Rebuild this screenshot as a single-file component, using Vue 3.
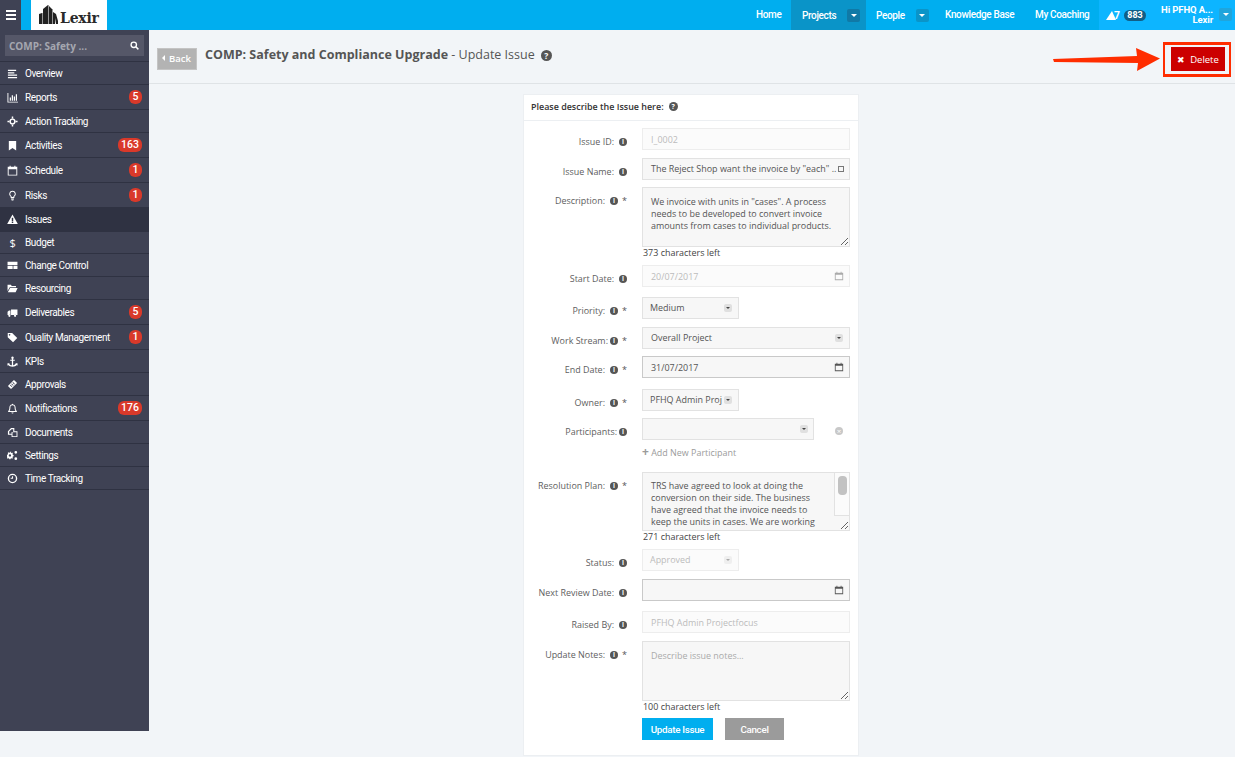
<script setup>
const navIcons = {
  overview: 'M1 2h9v1.3H1zM1 4.6h7v1.3H1zM1 7.2h10v1.3H1zM1 9.8h10v1.3H1z',
  reports: 'M0.5 1h1v9.5H12v1H0.5zM3 6h1.3v3.5H3zM5.2 3.5h1.3v6H5.2zM7.4 5h1.3v4.5H7.4zM9.6 2.5h1.3v7H9.6z',
  action: 'M6 2.6a3.4 3.4 0 1 1 0 6.8a3.4 3.4 0 0 1 0-6.8zm0 1.6a1.8 1.8 0 1 0 0 3.6a1.8 1.8 0 0 0 0-3.6zM5.2 0.5h1.6v2.4H5.2zM5.2 9.1h1.6v2.4H5.2zM0.5 5.2h2.4v1.6H0.5zM9.1 5.2h2.4v1.6H9.1z',
  activities: 'M2 1h8v10.5L6 8.6L2 11.5z',
  schedule: 'M0.8 2h2V0.8h1.2V2h4V0.8h1.2V2h2v9.5H0.8zM1.8 4.6v5.9h8.4V4.6z',
  risks: 'M6 0.8a3.6 3.6 0 0 1 2 6.6V8.6H4V7.4A3.6 3.6 0 0 1 6 0.8zm0 1.1a2.5 2.5 0 0 0-1 4.8v0.9h2v-0.9a2.5 2.5 0 0 0-1-4.8zM4.4 9.3h3.2v1H4.4zM5 10.7h2v0.8H5z',
  issues: 'M6 0.6L11.8 11H0.2zM5.2 4v3.8h1.6V4zM5.2 8.4v1.4h1.6V8.4z',
  changeControl: 'M0.6 2h10.8v3.4H0.6zM0.6 6.4h5.6v3.4H0.6zM7 6.4h4.4v3.4H7z',
  resourcing: 'M0.6 2h3.6l1 1.2h4.6v1.4H3L0.6 8.6zM3.4 5.4h8.2L9.4 10H0.9z',
  deliverables: 'M4.4 2.6h7v6.2h-7zM0.6 5.2L2.2 3.8h1.6v5H0.6zM2.6 8.4a1.2 1.2 0 1 1 0 2.4a1.2 1.2 0 0 1 0-2.4zM8.8 8.4a1.2 1.2 0 1 1 0 2.4a1.2 1.2 0 0 1 0-2.4z',
  quality: 'M0.8 1h4.8l5.6 5.6l-4.6 4.6L0.8 5.6zM2.8 2.2a.9.9 0 1 0 0 1.8a.9.9 0 0 0 0-1.8z',
  kpis: 'M6 0.5a1.4 1.4 0 0 1 .7 2.6v.9h1.8v1.2H6.7v4.9c1.4-.2 2.5-.9 3-1.8L8.7 8h2.8v2.6l-.8-.8C9.8 10.9 8 11.7 6 11.7s-3.8-.8-4.7-1.9l-.8.8V8h2.8l-1 .4c.5.9 1.6 1.6 3 1.8V5.2H3.5V4h1.8v-.9A1.4 1.4 0 0 1 6 .5z',
  approvals: 'M7.6 1L11 4.4L4.4 11L1 7.6zM6.6 3.4l-.6.6l2 2l.6-.6zM5.2 4.8l-.6.6l2 2l.6-.6zM3.8 6.2l-.6.6l2 2l.6-.6z',
  notifications: 'M6 0.8c.4 0 .7.3.7.7c1.7.3 2.7 1.6 2.7 3.4c0 2.3.5 3.2 1.4 4.1v.8H1.2V9c.9-.9 1.4-1.8 1.4-4.1c0-1.8 1-3.1 2.7-3.4c0-.4.3-.7.7-.7zm0 1.7C4.6 2.5 3.7 3.4 3.7 5c0 1.8-.3 2.9-.9 3.7h6.4c-.6-.8-.9-1.9-.9-3.7c0-1.6-.9-2.5-2.3-2.5zM4.8 10.3h2.4a1.2 1.2 0 0 1-2.4 0z',
  documents: 'M4.4 1H8v3.6h3.4V11H5V8.4H1V4.6zm.6 1.4L2.4 5v2.4H5V5.5h1.8V2.4zM6 5.6V10h4.400V5.600z',
  settings: 'M4 3l.9.3.7-.5.9.9-.5.7.3.9.9.2v1.3l-.9.2-.3.9.5.7-.9.9-.7-.5-.9.3-.2.9H2.500l-.2-.9-.9-.3-.7.5-.9-.9.5-.7-.3-.9L0 6.500V5.200l.9-.2.3-.9-.5-.7.9-.9.7.5.9-.3.2-.9h1.300zM3.200 4.600a1.300 1.300 0 1 0 0 2.600a1.300 1.300 0 0 0 0-2.600zM9.600 1a1.500 1.500 0 1 1 0 3a1.500 1.500 0 0 1 0-3zm0 7a1.500 1.500 0 1 1 0 3a1.500 1.500 0 0 1 0-3z',
  time: 'M6 .8a5.200 5.200 0 1 1 0 10.400A5.200 5.200 0 0 1 6 .8zm0 1.500a3.700 3.700 0 1 0 0 7.400a3.700 3.700 0 0 0 0-7.400zM5.500 3.500h1.100v2.800H4V5.300h1.500z'
}
const sidebar = [
  { name: 'Overview', icon: 'overview' },
  { name: 'Reports', icon: 'reports', badge: '5' },
  { name: 'Action Tracking', icon: 'action' },
  { name: 'Activities', icon: 'activities', badge: '163' },
  { name: 'Schedule', icon: 'schedule', badge: '1' },
  { name: 'Risks', icon: 'risks', badge: '1' },
  { name: 'Issues', icon: 'issues', active: true },
  { name: 'Budget', glyph: '$', compact: true },
  { name: 'Change Control', icon: 'changeControl' },
  { name: 'Resourcing', icon: 'resourcing' },
  { name: 'Deliverables', icon: 'deliverables', badge: '5' },
  { name: 'Quality Management', icon: 'quality', badge: '1' },
  { name: 'KPIs', icon: 'kpis' },
  { name: 'Approvals', icon: 'approvals' },
  { name: 'Notifications', icon: 'notifications', badge: '176' },
  { name: 'Documents', icon: 'documents' },
  { name: 'Settings', icon: 'settings' },
  { name: 'Time Tracking', icon: 'time' }
]
const calendar = 'M1 2h2V1h1v1h4V1h1v1h2v9H1zM2 4.500V10h8V4.500z'
</script>

<template>
  <div class="page">
    <header class="topbar">
      <button class="burger" aria-label="Menu"><span></span><span></span><span></span></button>
      <div class="logo">
        <svg width="21" height="21" viewBox="0 0 21 21" aria-hidden="true">
          <path fill="#222" d="M0 20V10l3-1v11zM4 20V5l5-4v19zM10 20V2l3 3v15zM14 20V8l3 2l2 7v3h-2v-6l-1 6z" />
          <path fill="#999" d="M3 20V9h1v11zM9 20V1h1v19zM13 20V5h1v15z" />
        </svg>
        <span class="logo-text">Lexir</span>
      </div>
      <nav class="mainnav">
        <a class="navitem home">Home</a>
        <a class="navitem active projects">Projects<i class="caret-box"><b></b></i></a>
        <a class="navitem people">People<i class="caret-box"><b></b></i></a>
        <a class="navitem kb">Knowledge Base</a>
        <a class="navitem coaching">My Coaching</a>
      </nav>
      <div class="userarea">
        <svg class="bell" width="11" height="11" viewBox="0 0 11 11" aria-hidden="true"><path fill="#fff" d="M6 1L10 10H0z" /></svg>
        <span class="count">7</span>
        <span class="pill">883</span>
        <span class="hello"><span>Hi PFHQ A...</span><span>Lexir</span></span>
        <i class="caret-box light"><b></b></i>
      </div>
    </header>

    <div class="body">
      <aside class="sidebar">
        <div class="searchwrap">
          <div class="search">
            <span>COMP: Safety ...</span>
            <svg width="9" height="9" viewBox="0 0 10 10" aria-hidden="true"><circle cx="4.200" cy="4.200" r="3" fill="none" stroke="#fff" stroke-width="1.500" /><path d="M6.500 6.500L9.300 9.300" stroke="#fff" stroke-width="1.600" /></svg>
          </div>
        </div>
        <a v-for="item in sidebar" :key="item.name" class="sideitem" :class="{ tall: item.badge, current: item.active, compact: item.compact }">
          <span class="sideicon">
            <span v-if="item.glyph" class="glyph">{{ item.glyph }}</span>
            <svg v-else width="11" height="11" viewBox="0 0 12 12" aria-hidden="true"><path fill="#fff" fill-rule="evenodd" :d="navIcons[item.icon]" /></svg>
          </span>
          <span class="sidename">{{ item.name }}</span>
          <span v-if="item.badge" class="badge">{{ item.badge }}</span>
        </a>
      </aside>

      <main class="main">
        <div class="pagehead">
          <button class="back"><i></i>Back</button>
          <h1><b>COMP: Safety and Compliance Upgrade</b> - Update Issue</h1>
          <span class="helpdot big">?</span>
          <div class="delete-mark"><button class="delete"><span class="x">✖</span>Delete</button></div>
          <svg class="arrow" width="108" height="26" viewBox="0 0 108 26" aria-hidden="true">
            <path fill="#ff2d00" d="M0 12L84 9L83 1L107 11.500L84 24L85 16L1 15z" />
          </svg>
        </div>

        <section class="card">
          <div class="cardhead">Please describe the Issue here:<span class="helpdot">?</span></div>
          <form class="form" @submit.prevent>
            <div class="row">
              <label>Issue ID:<i class="info">i</i></label>
              <input class="field disabled" value="I_0002" disabled />
            </div>
            <div class="row g8">
              <label>Issue Name:<i class="info">i</i></label>
              <div class="field named">The Reject Shop want the invoice by "each" ..<span class="clip"></span></div>
            </div>
            <div class="row g7">
              <label>Description:<i class="info">i</i><em>*</em></label>
              <div class="stack">
                <textarea class="field area desc" readonly>We invoice with units in "cases". A process needs to be developed to convert invoice amounts from cases to individual products.</textarea>
                <div class="left">373 characters left</div>
              </div>
            </div>
            <div class="row g6">
              <label>Start Date:<i class="info">i</i></label>
              <div class="field disabled dated">20/07/2017
                <svg width="10" height="10" viewBox="0 0 12 12" aria-hidden="true"><path fill="#aaa" fill-rule="evenodd" :d="calendar" /></svg>
              </div>
            </div>
            <div class="row g10">
              <label>Priority:<i class="info">i</i><em>*</em></label>
              <div class="field select narrow">Medium<i class="selcaret"><b></b></i></div>
            </div>
            <div class="row g8">
              <label>Work Stream:<i class="info tight">i</i><em>*</em></label>
              <div class="field select">Overall Project<i class="selcaret"><b></b></i></div>
            </div>
            <div class="row g7">
              <label>End Date:<i class="info">i</i><em>*</em></label>
              <div class="field dated strong">31/07/2017
                <svg width="10" height="10" viewBox="0 0 12 12" aria-hidden="true"><path fill="#555" fill-rule="evenodd" :d="calendar" /></svg>
              </div>
            </div>
            <div class="row g11">
              <label>Owner:<i class="info">i</i><em>*</em></label>
              <div class="field select narrow clipname"><span>PFHQ Admin Proj</span><i class="selcaret"><b></b></i></div>
            </div>
            <div class="row g7">
              <label>Participants:<i class="info tight">i</i></label>
              <div class="stack">
                <div class="partline">
                  <div class="field select mid"><i class="selcaret"><b></b></i></div>
                  <span class="remove">×</span>
                </div>
                <a class="addnew"><span>+</span> Add New Participant</a>
              </div>
            </div>
            <div class="row g13">
              <label>Resolution Plan:<i class="info">i</i><em>*</em></label>
              <div class="stack">
                <div class="planwrap">
                  <textarea class="field area plan" readonly>TRS have agreed to look at doing the conversion on their side. The business have agreed that the invoice needs to keep the units in cases. We are working through the details of how the conversion will be handled by the TRS team and what is needed.</textarea>
                  <div class="track"><span class="thumb"></span></div>
                </div>
                <div class="left short">271 characters left</div>
              </div>
            </div>
            <div class="row g6">
              <label>Status:<i class="info">i</i></label>
              <div class="field select narrow disabled">Approved<i class="selcaret faint"><b></b></i></div>
            </div>
            <div class="row g8">
              <label>Next Review Date:<i class="info">i</i></label>
              <div class="field dated strong">
                <svg class="push" width="10" height="10" viewBox="0 0 12 12" aria-hidden="true"><path fill="#555" fill-rule="evenodd" :d="calendar" /></svg>
              </div>
            </div>
            <div class="row g10">
              <label>Raised By:<i class="info">i</i></label>
              <input class="field disabled" value="PFHQ Admin Projectfocus" disabled />
            </div>
            <div class="row g8">
              <label>Update Notes:<i class="info">i</i><em>*</em></label>
              <div class="stack">
                <textarea class="field area notes" placeholder="Describe issue notes..."></textarea>
                <div class="left">100 characters left</div>
              </div>
            </div>
            <div class="actions">
              <button class="primary">Update Issue</button>
              <button class="cancel">Cancel</button>
            </div>
          </form>
        </section>
      </main>
    </div>
  </div>
</template>

<style>
html, body { margin: 0; background: #f2f5f8; }
</style>

<style scoped>
* { box-sizing: border-box; }
.page { width: 1235px; height: 757px; overflow: hidden; background: #f2f5f8; font-family: "Open Sans", sans-serif; color: #555; display: flex; flex-direction: column; }
button { font-family: inherit; border: 0; cursor: pointer; }
i, em { font-style: normal; }

.topbar { height: 30px; flex: none; display: flex; background: #00aeef; font-family: Roboto, sans-serif; color: #fff; }
.burger { width: 21px; background: #3f4254; display: flex; flex-direction: column; justify-content: center; align-items: center; gap: 2px; padding: 0; }
.burger span { width: 10px; height: 2px; background: #fff; }
.logo { width: 76px; margin-left: 10px; background: #fff; display: flex; align-items: flex-end; padding: 0 0 5px 8px; }
.logo-text { font-family: "DejaVu Serif", serif; font-weight: 700; font-size: 14px; line-height: 14px; color: #2a2a2a; letter-spacing: -.2px; }
.mainnav { margin-left: auto; display: flex; height: 30px; }
.navitem { display: flex; align-items: center; font-size: 10px; letter-spacing: -.35px; font-weight: 500; color: #fff; white-space: nowrap; }
.navitem.home { width: 46px; padding: 0 0 2px 11px; }
.navitem.active { background: #0a94c8; width: 75px; padding-left: 11px; }
.navitem.projects { gap: 11px; padding-top: 1px; }
.navitem.people { padding: 1px 0 0 10px; gap: 11px; width: 70px; }
.navitem.kb { width: 89px; padding: 0 0 2px 9px; }
.navitem.coaching { width: 74px; padding: 0 0 2px 10px; }
.navitem .caret-box { margin-top: -1px; }
.caret-box { width: 13px; height: 13px; border-radius: 2px; background: #0a94c8; display: flex; align-items: center; justify-content: center; }
.navitem.active .caret-box { background: #1079a6; }
.caret-box b { width: 0; height: 0; border: 3px solid transparent; border-top-color: #fff; border-bottom: 0; }
.userarea { width: 136px; background: #0db5ff; display: flex; align-items: center; position: relative; padding-left: 7px; }
.bell { flex: none; }
.count { font-size: 10.500px; font-weight: 700; margin-left: -3px; }
.pill { margin-left: 4px; height: 11px; width: 22px; border-radius: 6px; background: #125e86; font-size: 9px; font-weight: 700; line-height: 11px; text-align: center; }
.hello { margin-left: 16px; width: 51px; display: flex; flex-direction: column; align-items: flex-end; font-size: 9.500px; letter-spacing: -.1px; font-weight: 700; line-height: 10px; white-space: nowrap; }
.caret-box.light { position: absolute; right: 3px; top: 8px; background: #20a5dc; }

.body { flex: 1; display: flex; min-height: 0; }
.sidebar { width: 149px; height: 701px; flex: none; background: #3f4254; font-family: Roboto, sans-serif; color: #fff; }
.searchwrap { height: 32px; padding: 5px; border-bottom: 1px solid #2f3242; }
.search { height: 21px; background: #555768; display: flex; align-items: center; justify-content: space-between; padding: 0 5px 0 4px; font-size: 10px; font-weight: 700; color: #a5a7b0; font-family: "Open Sans", sans-serif; }
.sideitem { height: 23px; display: flex; align-items: center; padding: 0 7px; border-bottom: 1px solid #2f3242; font-size: 10px; letter-spacing: -.4px; }
.sideitem.tall { height: 25px; }
.sideitem.current { background: #2f3242; height: 24px; }
.sideitem.compact { height: 22px; }
.sideicon { width: 11px; height: 12px; display: flex; align-items: center; justify-content: center; flex: none; }
.glyph { font-size: 11px; font-family: "Open Sans", sans-serif; }
.sidename { margin-left: 7px; white-space: nowrap; }
.badge { margin-left: auto; min-width: 13px; height: 14px; padding: 0 3px; border-radius: 6px; background: #d9392a; color: #fff; font-size: 10.500px; letter-spacing: 0; line-height: 14px; text-align: center; font-weight: 500; }

.main { flex: 1; min-width: 0; position: relative; }
.pagehead { height: 54px; border-bottom: 1px solid #dfe3e6; display: flex; align-items: flex-start; padding: 18px 4px 0 8px; position: relative; }
.back { width: 40px; height: 22px; background: #b3b3b3; border: 1px solid #c4c4c4; color: #fff; font-size: 9.500px; font-weight: 600; display: flex; align-items: center; padding: 0 0 2px 4px; gap: 4px; }
.back i { width: 0; height: 0; border: 3px solid transparent; border-right-color: #fff; border-left: 0; }
h1 { margin: -1px 0 0 8px; font-size: 12.500px; line-height: 16px; font-weight: 400; color: #555; white-space: nowrap; }
h1 b { font-weight: 700; }
.helpdot { display: inline-block; width: 9px; height: 9px; border-radius: 50%; background: #555; color: #fff; font-size: 7px; font-weight: 700; line-height: 9px; text-align: center; margin-left: 5px; }
.helpdot.big { width: 11px; height: 11px; line-height: 11px; font-size: 8.500px; margin: 2px 0 0 6px; }
.delete-mark { margin: -6px 0 0 auto; width: 68px; height: 35px; border: 2px solid #ff2d00; border-top-width: 3px; border-bottom-width: 3px; padding: 2px 4px 0 6px; background: #f2f5f8; }
.delete { width: 54px; height: 24px; background: #cc0000; color: #fff; font-size: 9.500px; font-weight: 400; display: flex; align-items: center; justify-content: center; gap: 5px; padding: 0; }
.x { font-size: 9px; }
.arrow { position: absolute; left: 904px; top: 17px; }

.card { width: 336px; height: 662px; margin: 10px 0 0 374px; background: #fff; border: 1px solid #eceff2; }
.cardhead { height: 26px; border-bottom: 1px solid #eceff2; padding: 0 0 2px 7px; font-size: 8.950px; font-weight: 600; color: #333; display: flex; align-items: center; }
.form { padding-top: 7px; }
.row { display: flex; align-items: flex-start; }
.g6 { margin-top: 6px; }
.g7 { margin-top: 7px; }
.g8 { margin-top: 8px; }
.g10 { margin-top: 10px; }
.g11 { margin-top: 11px; }
.g13 { margin-top: 13px; }
label { width: 108px; flex: none; padding: 6px 5px 0 0; line-height: 16px; font-size: 8.950px; color: #5e5e5e; display: flex; justify-content: flex-end; align-items: center; white-space: nowrap; }
label:has(em) { padding-right: 3px; }
label em { width: 9px; margin-left: 2px; font-size: 9px; text-align: center; color: #555; }
.info { width: 8px; height: 8px; border-radius: 50%; background: #555; color: #fff; font-size: 6.500px; font-weight: 700; line-height: 8px; text-align: center; margin-left: 5px; flex: none; }
.info.tight { margin-left: 2px; }
.field { display: flex; align-items: center; width: 208px; height: 22px; margin-left: 10px; background: #f7f7f7; border: 1px solid #e2e2e2; padding: 0 8px; font-family: inherit; font-size: 8.950px; color: #555; position: relative; white-space: nowrap; overflow: hidden; }
.field.disabled { background: #fbfbfb; border-color: #ededed; color: #bbb; }
.named { padding: 0 5px 1px 8px; justify-content: space-between; }
.clip { width: 6px; height: 6px; border: 1px solid #777; flex: none; margin-top: 1px; }
.dated { justify-content: space-between; padding-right: 5px; }
.push { margin-left: auto; }
.strong { border-color: #c9c9c9; }
.select { padding: 0 6px 2px 8px; justify-content: space-between; }
.narrow { width: 97px; padding-left: 7px; }
.clipname span { overflow: hidden; width: 72px; }
.mid { width: 172px; justify-content: flex-end; padding-right: 5px; }
.selcaret { width: 8px; height: 8px; background: #e0e0e0; border-radius: 2px; display: flex; align-items: center; justify-content: center; flex: none; margin-top: 2px; }
.selcaret.faint { background: #efefef; }
.selcaret b { width: 0; height: 0; border: 2px solid transparent; border-top-color: #444; border-bottom: 0; }
.selcaret.faint b { border-top-color: #aaa; }
.stack { display: flex; flex-direction: column; }
.area { display: block; white-space: normal; line-height: 12px; resize: vertical; padding: 8px; outline: none; }
.desc, .notes { height: 60px; }
.planwrap { position: relative; }
.plan { height: 59px; padding: 7px 22px 0 8px; }
.track { position: absolute; left: 202px; top: 1px; width: 15px; height: 43px; background: #fbfbfb; border-left: 1px solid #e2e2e2; border-bottom: 1px solid #e2e2e2; }
.thumb { position: absolute; left: 3px; top: 3px; width: 9px; height: 19px; border-radius: 4px; background: #c2c2c2; }
.notes::placeholder { color: #aaa; }
.left { margin-left: 11px; font-size: 8.950px; line-height: 12px; color: #444; }
.partline { display: flex; align-items: flex-start; }
.remove { width: 8px; height: 8px; margin: 9px 0 0 21px; border-radius: 50%; background: #c8c8c8; color: #fff; font-size: 8px; line-height: 8px; text-align: center; }
.addnew { margin: 7px 0 0 10px; font-size: 8.950px; line-height: 12px; color: #9b9b9b; }
.addnew span { font-weight: 700; font-size: 12px; line-height: 10px; }
.actions { display: flex; gap: 12px; margin: 5px 0 0 118px; }
.primary, .cancel { height: 22px; color: #fff; font-family: Roboto, sans-serif; font-size: 9.800px; font-weight: 500; letter-spacing: -.3px; padding: 0; }
.primary { width: 71px; background: #00aeef; }
.cancel { width: 59px; background: #9b9b9b; }
</style>
